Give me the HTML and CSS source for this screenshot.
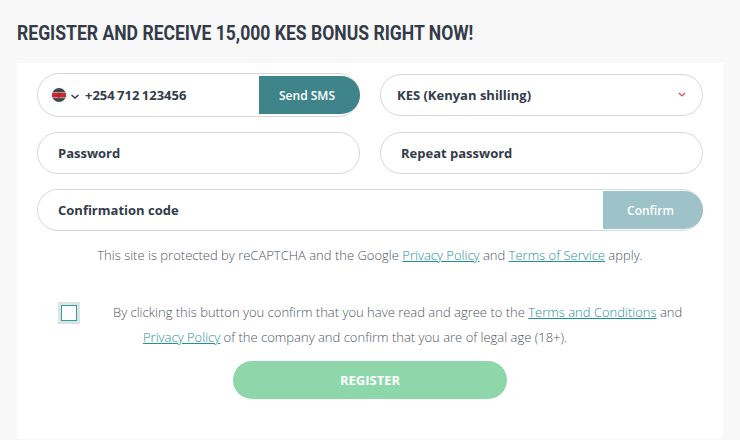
FILE: index.html
```html
<!DOCTYPE html>
<html lang="en">
<head>
	<meta charset="UTF-8">
	<title>Register</title>
	<link rel="stylesheet" href="styles.css">
</head>
<body>

	<h1>Register and receive 15,000 KES bonus right now!</h1>

	<form class="card" action="" method="get">

		<div class="row">
			<div class="field field-phone">
				<svg class="flag" width="14" height="14" viewBox="0 0 14 14">
					<defs>
						<clipPath id="flag-clip"><circle cx="7" cy="7" r="7"/></clipPath>
					</defs>
					<g clip-path="url(#flag-clip)">
						<rect width="14" height="14" fill="#41464f"/>
						<rect y="4.4" width="14" height=".6" fill="#e8e8e8"/>
						<rect y="5" width="14" height="4.5" fill="#dc2229"/>
						<rect y="9.5" width="14" height=".6" fill="#e8e8e8"/>
						<ellipse cx="7" cy="7.2" rx="1.4" ry="2.6" fill="#a5282c"/>
					</g>
				</svg>
				<svg class="chev" width="8" height="5" viewBox="0 0 8 5">
					<path d="M.5 1l3.500 3 3.500-3" fill="none" stroke="#333b49" stroke-width="1.5"/>
				</svg>
				<span class="phone">+254 712 123456</span>
				<button type="button" class="btn-sms">Send SMS</button>
			</div>
			<div class="field field-select">
				<span>KES (Kenyan shilling)</span>
				<svg class="chev-red" width="8" height="5" viewBox="0 0 8 5">
					<path d="M1 1l3 3 3-3" fill="none" stroke="#e0454f" stroke-width="1.2"/>
				</svg>
			</div>
		</div>

		<div class="row">
			<div class="field"><span>Password</span></div>
			<div class="field"><span>Repeat password</span></div>
		</div>

		<div class="field field-code">
			<span>Confirmation code</span>
			<button type="button" class="btn-confirm">Confirm</button>
		</div>

		<p class="note">This site is protected by reCAPTCHA and the Google <a href="#">Privacy Policy</a> and <a href="#">Terms of Service</a> apply.</p>

		<div class="agree">
			<div class="check"><i></i></div>
			<p>By clicking this button you confirm that you have read and agree to the <a href="#">Terms and Conditions</a> and <a href="#">Privacy Policy</a> of the company and confirm that you are of legal age (18+).</p>
		</div>

		<button type="button" class="btn-register">Register</button>
	</form>

</body>
</html>
```

FILE: styles.css
```css
* {
	box-sizing: border-box;
}
html,
body {
	height: 100%;
}
body {
	margin: 0;
	padding: 0 17px;
	overflow: hidden;
	background-color: #f8f8f8;
	font-family: "Open Sans", sans-serif;
	color: #333b49;
}
h1 {
	margin: 0;
	padding-top: 21px;
	height: 63px;
	width: 530px;
	font-family: Roboto, sans-serif;
	font-size: 20px;
	line-height: 24px;
	font-weight: 700;
	white-space: nowrap;
	text-transform: uppercase;
	transform: scaleX(.878);
	transform-origin: left top;
}
.card {
	padding: 11px 20px 40px;
	width: 706px;
	height: 376px;
	background-color: #fff;
}
.row {
	display: flex;
	gap: 20px;
	margin-bottom: 15px;
}
.field {
	position: relative;
	display: flex;
	align-items: center;
	flex: none;
	padding-left: 20px;
	width: 323px;
	height: 42px;
	border: 1px solid #d5d9da;
	border-radius: 21px;
	background-color: #fff;
	font-size: 13px;
	font-weight: 700;
}
.field-phone {
	margin-top: -1px;
	height: 44px;
	border-radius: 22px;
	padding-left: 14px;
}
.field-select {
	justify-content: space-between;
	padding-left: 16px;
	padding-right: 16px;
}
.chev-red {
	margin-top: -2px;
}
.flag {
	flex: none;
}
.chev {
	flex: none;
	margin: 3px 0 0 5px;
}
.phone {
	margin-left: 6px;
	word-spacing: -1px;
}
.btn-sms,
.btn-confirm {
	position: absolute;
	top: 2px;
	right: -1px;
	padding: 0 5px 0 0;
	border: none;
	border-radius: 0 20px 20px 0;
	color: #fff;
	font-family: inherit;
	font-size: 12px;
	font-weight: 600;
}
.btn-sms {
	width: 101px;
	height: 38px;
	background-color: #3f848b;
}
.btn-confirm {
	top: 1px;
	width: 100px;
	height: 38px;
	background-color: #9dc2c7;
}
.field-code {
	width: 100%;
}
.note {
	margin: 15px 0 0;
	font-size: 13px;
	font-weight: 300;
	line-height: 18px;
	text-align: center;
	color: #4f5561;
}
a {
	color: #1f9298;
}
.agree {
	display: flex;
	margin-top: 36px;
}
.agree p {
	margin: 0 0 0 63px;
	width: 545px;
	font-size: 13px;
	font-weight: 300;
	line-height: 25px;
	text-indent: -30px;
	color: #4f5561;
}
.check {
	flex: none;
	margin-left: 21px;
	margin-top: 2px;
	padding: 3px;
	width: 22px;
	height: 22px;
	background-color: #dde3e3;
}
.check i {
	display: block;
	width: 16px;
	height: 16px;
	border: 1px solid #2b9ea3;
	background-color: #fff;
}
.btn-register {
	display: block;
	margin: 11px auto 0;
	width: 274px;
	height: 38px;
	border: none;
	border-radius: 19px;
	background-color: #8dd7ab;
	color: #fff;
	font-family: inherit;
	font-size: 13px;
	font-weight: 700;
	text-transform: uppercase;
}
```
